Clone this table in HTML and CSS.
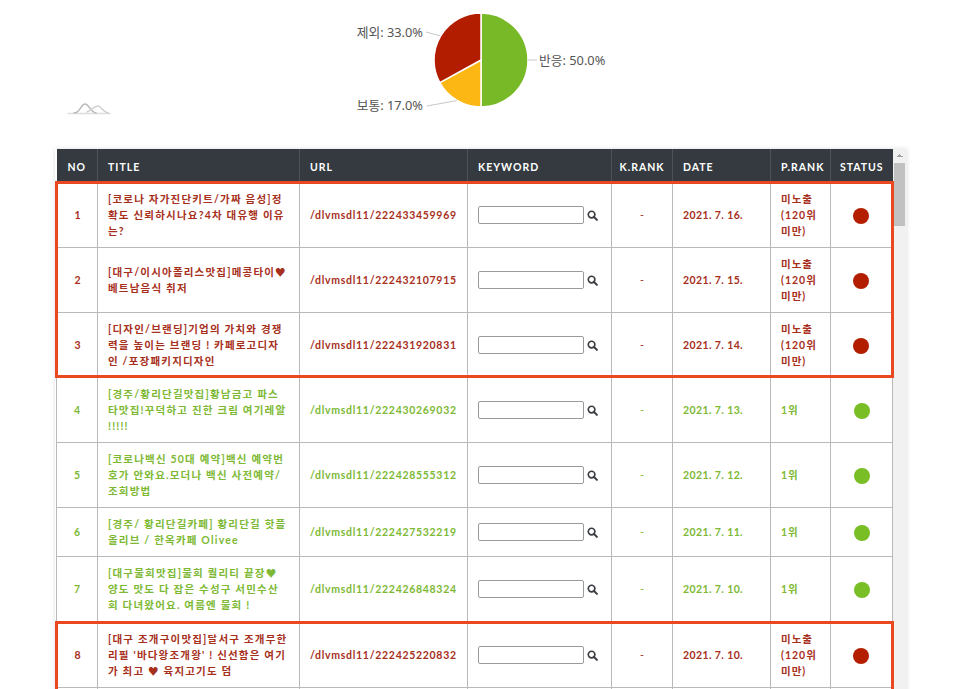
FILE: index.html
```html
<!DOCTYPE html>
<html lang="ko">
<head>
<meta charset="utf-8">
<title>포스팅 순위</title>
<link rel="stylesheet" href="styles.css">
</head>
<body>
<div class="chart">
  <svg class="chart-svg" width="966" height="125" viewBox="0 0 966 125">
    <g class="pie">
      <path d="M481,60 L481,13 A47,47 0 0 1 481,107 Z" fill="#78b927"/>
      <path d="M481,60 L481,107 A47,47 0 0 1 439.8,82.6 Z" fill="#fdb714"/>
      <path d="M481,60 L439.8,82.6 A47,47 0 0 1 481,13 Z" fill="#b21d00"/>
    </g>
    <g class="ticks">
      <line x1="528" y1="60" x2="537" y2="60"/>
      <line x1="426" y1="32" x2="440.5" y2="36"/>
      <line x1="427" y1="106" x2="457" y2="100.5"/>
    </g>
    <text class="lbl" x="539" y="64.5">반응: 50.0%</text>
    <text class="lbl" x="423" y="36.5" text-anchor="end">제외: 33.0%</text>
    <text class="lbl" x="423" y="110" text-anchor="end">보통: 17.0%</text>
    <g class="logo">
      <path class="l1" d="M68,113.5 L110,113.5"/>
      <path class="l2" d="M74,113 C80,113 81,104 85,104 C89,104 90,112 96,113"/>
      <path class="l3" d="M87,112 C92,110 94,106 98,106 C101,106 102,111 108,113"/>
    </g>
  </svg>
</div>

<div class="card">
  <table class="rank">
    <colgroup>
      <col class="c-no"><col class="c-title"><col class="c-url"><col class="c-kw"><col class="c-kr"><col class="c-date"><col class="c-pr"><col class="c-st">
    </colgroup>
    <thead>
      <tr><th class="center">NO</th><th>TITLE</th><th>URL</th><th>KEYWORD</th><th class="center">K.RANK</th><th>DATE</th><th>P.RANK</th><th class="center">STATUS</th></tr>
    </thead>
    <tbody class="alert">
      <tr class="miss">
        <td class="no">1</td>
        <td class="title">[코로나 자가진단키트/가짜 음성]정<br>확도 신뢰하시나요?4차 대유행 이유<br>는?</td>
        <td class="url">/dlvmsdl11/222433459969</td>
        <td class="kw"><span class="kw-box"><input class="kw-input" type="text"><svg class="mag" width="11" height="11" viewBox="0 0 12 12"><circle cx="5" cy="5" r="3.6"/><path d="M7.7 7.7 L10.8 10.8"/></svg></span></td>
        <td class="kr">-</td>
        <td class="date">2021. 7. 16.</td>
        <td class="pr">미노출<br>(120위<br>미만)</td>
        <td class="st"><span class="dot"></span></td>
      </tr>
      <tr class="miss">
        <td class="no">2</td>
        <td class="title">[대구/이시아폴리스맛집]메콩타이♥<br>베트남음식 취저</td>
        <td class="url">/dlvmsdl11/222432107915</td>
        <td class="kw"><span class="kw-box"><input class="kw-input" type="text"><svg class="mag" width="11" height="11" viewBox="0 0 12 12"><circle cx="5" cy="5" r="3.6"/><path d="M7.7 7.7 L10.8 10.8"/></svg></span></td>
        <td class="kr">-</td>
        <td class="date">2021. 7. 15.</td>
        <td class="pr">미노출<br>(120위<br>미만)</td>
        <td class="st"><span class="dot"></span></td>
      </tr>
      <tr class="miss">
        <td class="no">3</td>
        <td class="title">[디자인/브랜딩]기업의 가치와 경쟁<br>력을 높이는 브랜딩 ! 카페로고디자<br>인 /포장패키지디자인</td>
        <td class="url">/dlvmsdl11/222431920831</td>
        <td class="kw"><span class="kw-box"><input class="kw-input" type="text"><svg class="mag" width="11" height="11" viewBox="0 0 12 12"><circle cx="5" cy="5" r="3.6"/><path d="M7.7 7.7 L10.8 10.8"/></svg></span></td>
        <td class="kr">-</td>
        <td class="date">2021. 7. 14.</td>
        <td class="pr">미노출<br>(120위<br>미만)</td>
        <td class="st"><span class="dot"></span></td>
      </tr>
    </tbody>
    <tbody>
      <tr class="hit">
        <td class="no">4</td>
        <td class="title">[경주/황리단길맛집]황남금고 파스<br>타맛집!꾸덕하고 진한 크림 여기레알<br>!!!!!</td>
        <td class="url">/dlvmsdl11/222430269032</td>
        <td class="kw"><span class="kw-box"><input class="kw-input" type="text"><svg class="mag" width="11" height="11" viewBox="0 0 12 12"><circle cx="5" cy="5" r="3.6"/><path d="M7.7 7.7 L10.8 10.8"/></svg></span></td>
        <td class="kr">-</td>
        <td class="date">2021. 7. 13.</td>
        <td class="pr">1위</td>
        <td class="st"><span class="dot"></span></td>
      </tr>
      <tr class="hit">
        <td class="no">5</td>
        <td class="title">[코로나백신 50대 예약]백신 예약번<br>호가 안와요.모더나 백신 사전예약/<br>조회방법</td>
        <td class="url">/dlvmsdl11/222428555312</td>
        <td class="kw"><span class="kw-box"><input class="kw-input" type="text"><svg class="mag" width="11" height="11" viewBox="0 0 12 12"><circle cx="5" cy="5" r="3.6"/><path d="M7.7 7.7 L10.8 10.8"/></svg></span></td>
        <td class="kr">-</td>
        <td class="date">2021. 7. 12.</td>
        <td class="pr">1위</td>
        <td class="st"><span class="dot"></span></td>
      </tr>
      <tr class="hit">
        <td class="no">6</td>
        <td class="title">[경주/ 황리단길카페] 황리단길 핫플<br>올리브 / 한옥카페 Olivee</td>
        <td class="url">/dlvmsdl11/222427532219</td>
        <td class="kw"><span class="kw-box"><input class="kw-input" type="text"><svg class="mag" width="11" height="11" viewBox="0 0 12 12"><circle cx="5" cy="5" r="3.6"/><path d="M7.7 7.7 L10.8 10.8"/></svg></span></td>
        <td class="kr">-</td>
        <td class="date">2021. 7. 11.</td>
        <td class="pr">1위</td>
        <td class="st"><span class="dot"></span></td>
      </tr>
      <tr class="hit">
        <td class="no">7</td>
        <td class="title">[대구물회맛집]물회 퀄리티 끝장♥<br>양도 맛도 다 잡은 수성구 서민수산<br>회 다녀왔어요. 여름엔 물회 !</td>
        <td class="url">/dlvmsdl11/222426848324</td>
        <td class="kw"><span class="kw-box"><input class="kw-input" type="text"><svg class="mag" width="11" height="11" viewBox="0 0 12 12"><circle cx="5" cy="5" r="3.6"/><path d="M7.7 7.7 L10.8 10.8"/></svg></span></td>
        <td class="kr">-</td>
        <td class="date">2021. 7. 10.</td>
        <td class="pr">1위</td>
        <td class="st"><span class="dot"></span></td>
      </tr>
    </tbody>
    <tbody class="alert">
      <tr class="miss">
        <td class="no">8</td>
        <td class="title">[대구 조개구이맛집]달서구 조개무한<br>리필 '바다왕조개왕' ! 신선함은 여기<br>가 최고 ♥ 육지고기도 덤</td>
        <td class="url">/dlvmsdl11/222425220832</td>
        <td class="kw"><span class="kw-box"><input class="kw-input" type="text"><svg class="mag" width="11" height="11" viewBox="0 0 12 12"><circle cx="5" cy="5" r="3.6"/><path d="M7.7 7.7 L10.8 10.8"/></svg></span></td>
        <td class="kr">-</td>
        <td class="date">2021. 7. 10.</td>
        <td class="pr">미노출<br>(120위<br>미만)</td>
        <td class="st"><span class="dot"></span></td>
      </tr>
      <tr class="miss">
        <td class="no">9</td>
        <td class="title">[대구 수성구맛집]들안길 한우 맛집<br>가족모임 장소로 추천</td>
        <td class="url">/dlvmsdl11/222424180417</td>
        <td class="kw"><span class="kw-box"><input class="kw-input" type="text"><svg class="mag" width="11" height="11" viewBox="0 0 12 12"><circle cx="5" cy="5" r="3.6"/><path d="M7.7 7.7 L10.8 10.8"/></svg></span></td>
        <td class="kr">-</td>
        <td class="date">2021. 7. 9.</td>
        <td class="pr">미노출<br>(120위<br>미만)</td>
        <td class="st"><span class="dot"></span></td>
      </tr>
    </tbody>
    <tbody>
      <tr class="hit">
        <td class="no">10</td>
        <td class="title">[경주 카페]보문단지 호수뷰 카페<br>베이커리 맛집</td>
        <td class="url">/dlvmsdl11/222423051188</td>
        <td class="kw"><span class="kw-box"><input class="kw-input" type="text"><svg class="mag" width="11" height="11" viewBox="0 0 12 12"><circle cx="5" cy="5" r="3.6"/><path d="M7.7 7.7 L10.8 10.8"/></svg></span></td>
        <td class="kr">-</td>
        <td class="date">2021. 7. 8.</td>
        <td class="pr">1위</td>
        <td class="st"><span class="dot"></span></td>
      </tr>
      <tr class="hit">
        <td class="no">11</td>
        <td class="title">[대구 브런치]동성로 브런치 카페<br>분위기 좋은 곳</td>
        <td class="url">/dlvmsdl11/222422017736</td>
        <td class="kw"><span class="kw-box"><input class="kw-input" type="text"><svg class="mag" width="11" height="11" viewBox="0 0 12 12"><circle cx="5" cy="5" r="3.6"/><path d="M7.7 7.7 L10.8 10.8"/></svg></span></td>
        <td class="kr">-</td>
        <td class="date">2021. 7. 7.</td>
        <td class="pr">1위</td>
        <td class="st"><span class="dot"></span></td>
      </tr>
    </tbody>
  </table>
</div>
</body>
</html>
```
FILE: styles.css
```css
html, body {
  margin: 0;
  padding: 0;
  background: #fff;
  overflow: hidden;
  height: 100%;
}

body {
  font-family: Lato, "Noto Sans CJK KR", sans-serif;
}

.chart-svg {
  display: block;
}

.pie path {
  stroke: #fff;
  stroke-width: 1.5;
  stroke-linejoin: round;
}

.ticks line {
  stroke: #c8c8c8;
  stroke-width: 1;
}

.lbl {
  font-family: "Noto Sans", "Noto Sans CJK KR", sans-serif;
  font-size: 12.8px;
  fill: #555;
}

.logo path {
  fill: none;
  stroke-width: 1.5;
  stroke-linecap: round;
}
.logo .l1 { stroke: #dedede; }
.logo .l2 { stroke: #b9b9b9; }
.logo .l3 { stroke: #cfcfcf; }

/* scroll box; the scrollbar gutter is painted so it shows in captures */
.card {
  width: 852px;
  height: 560px;
  margin: 24px 0 0 55px;
  overflow-y: scroll;
  background-color: #fff;
  background-origin: border-box;
  background-image:
    linear-gradient(to top left, #a3a3a3 50%, transparent 50%),
    linear-gradient(to top right, #a3a3a3 50%, transparent 50%),
    linear-gradient(#c1c1c1, #c1c1c1),
    linear-gradient(#f1f1f1, #f1f1f1);
  background-size: 3px 3px, 3px 3px, 11px 63px, 15px 100%;
  background-position: right 7px top 5px, right 4px top 5px, right 2px top 14px, right 0 top 0;
  background-repeat: no-repeat;
  box-shadow: 0 0 4px rgba(0, 0, 0, 0.14);
}

.card::-webkit-scrollbar {
  width: 15px;
}
.card::-webkit-scrollbar-track {
  background: #f1f1f1;
}
.card::-webkit-scrollbar-thumb {
  background: #c1c1c1;
  border-left: 2px solid #f1f1f1;
  border-right: 2px solid #f1f1f1;
}

.rank {
  width: 837px;
  border-collapse: collapse;
  table-layout: fixed;
}

.c-no { width: 41px; }
.c-title { width: 202px; }
.c-url { width: 168px; }
.c-kw { width: 144px; }
.c-kr { width: 61px; }
.c-date { width: 98px; }
.c-pr { width: 60px; }
.c-st { width: 62px; }

.rank th {
  height: 29px;
  padding: 3px 10px 0;
  background: #343a40;
  color: #fff;
  font-size: 10.5px;
  font-weight: 700;
  letter-spacing: 1px;
  text-align: left;
  border-left: 1px solid #4c5259;
}
.rank th:first-child { border-left: none; }
.rank th.center { text-align: center; padding: 3px 4px 0; }

.rank td {
  padding: 8px 10px;
  border: 1px solid #b9b9b9;
  font-size: 10.5px;
  font-weight: 700;
  line-height: 16px;
  vertical-align: middle;
  white-space: nowrap;
}

.miss td { color: #a7301c; }
.hit td { color: #7db934; }

.rank td.no { text-align: center; padding-left: 4px; padding-right: 4px; }
.rank td.title { letter-spacing: 1.2px; white-space: normal; }
.rank td.url { letter-spacing: 0.7px; }
.rank td.kr { text-align: center; font-weight: 400; }
.rank td.date { letter-spacing: 0.4px; }
.rank td.pr { letter-spacing: 1px; white-space: normal; }
.rank td.st { text-align: center; }

.kw-box {
  display: flex;
  align-items: center;
  gap: 3px;
}

.kw-input {
  box-sizing: border-box;
  width: 106px;
  height: 18px;
  margin: 0;
  padding: 0 4px;
  border: 1px solid #9a9a9a;
  border-radius: 2px;
  background: #fff;
}

.mag circle {
  fill: none;
  stroke: #3a3d42;
  stroke-width: 1.8;
}
.mag path {
  stroke: #3a3d42;
  stroke-width: 2.2;
  stroke-linecap: round;
}

.dot {
  display: inline-block;
  width: 16px;
  height: 16px;
  border-radius: 50%;
  vertical-align: middle;
}
.miss .dot { background: #b31d00; }
.hit .dot { background: #79be25; }

.alert tr:first-child td { border-top: 3px solid #ea4820; padding-top: 7px; }
.alert tr:last-child td { border-bottom: 3px solid #ea4820; padding-bottom: 6px; }
.alert td:first-child { border-left: 3px solid #ea4820; }
.alert td:last-child { border-right: 3px solid #ea4820; }
```
